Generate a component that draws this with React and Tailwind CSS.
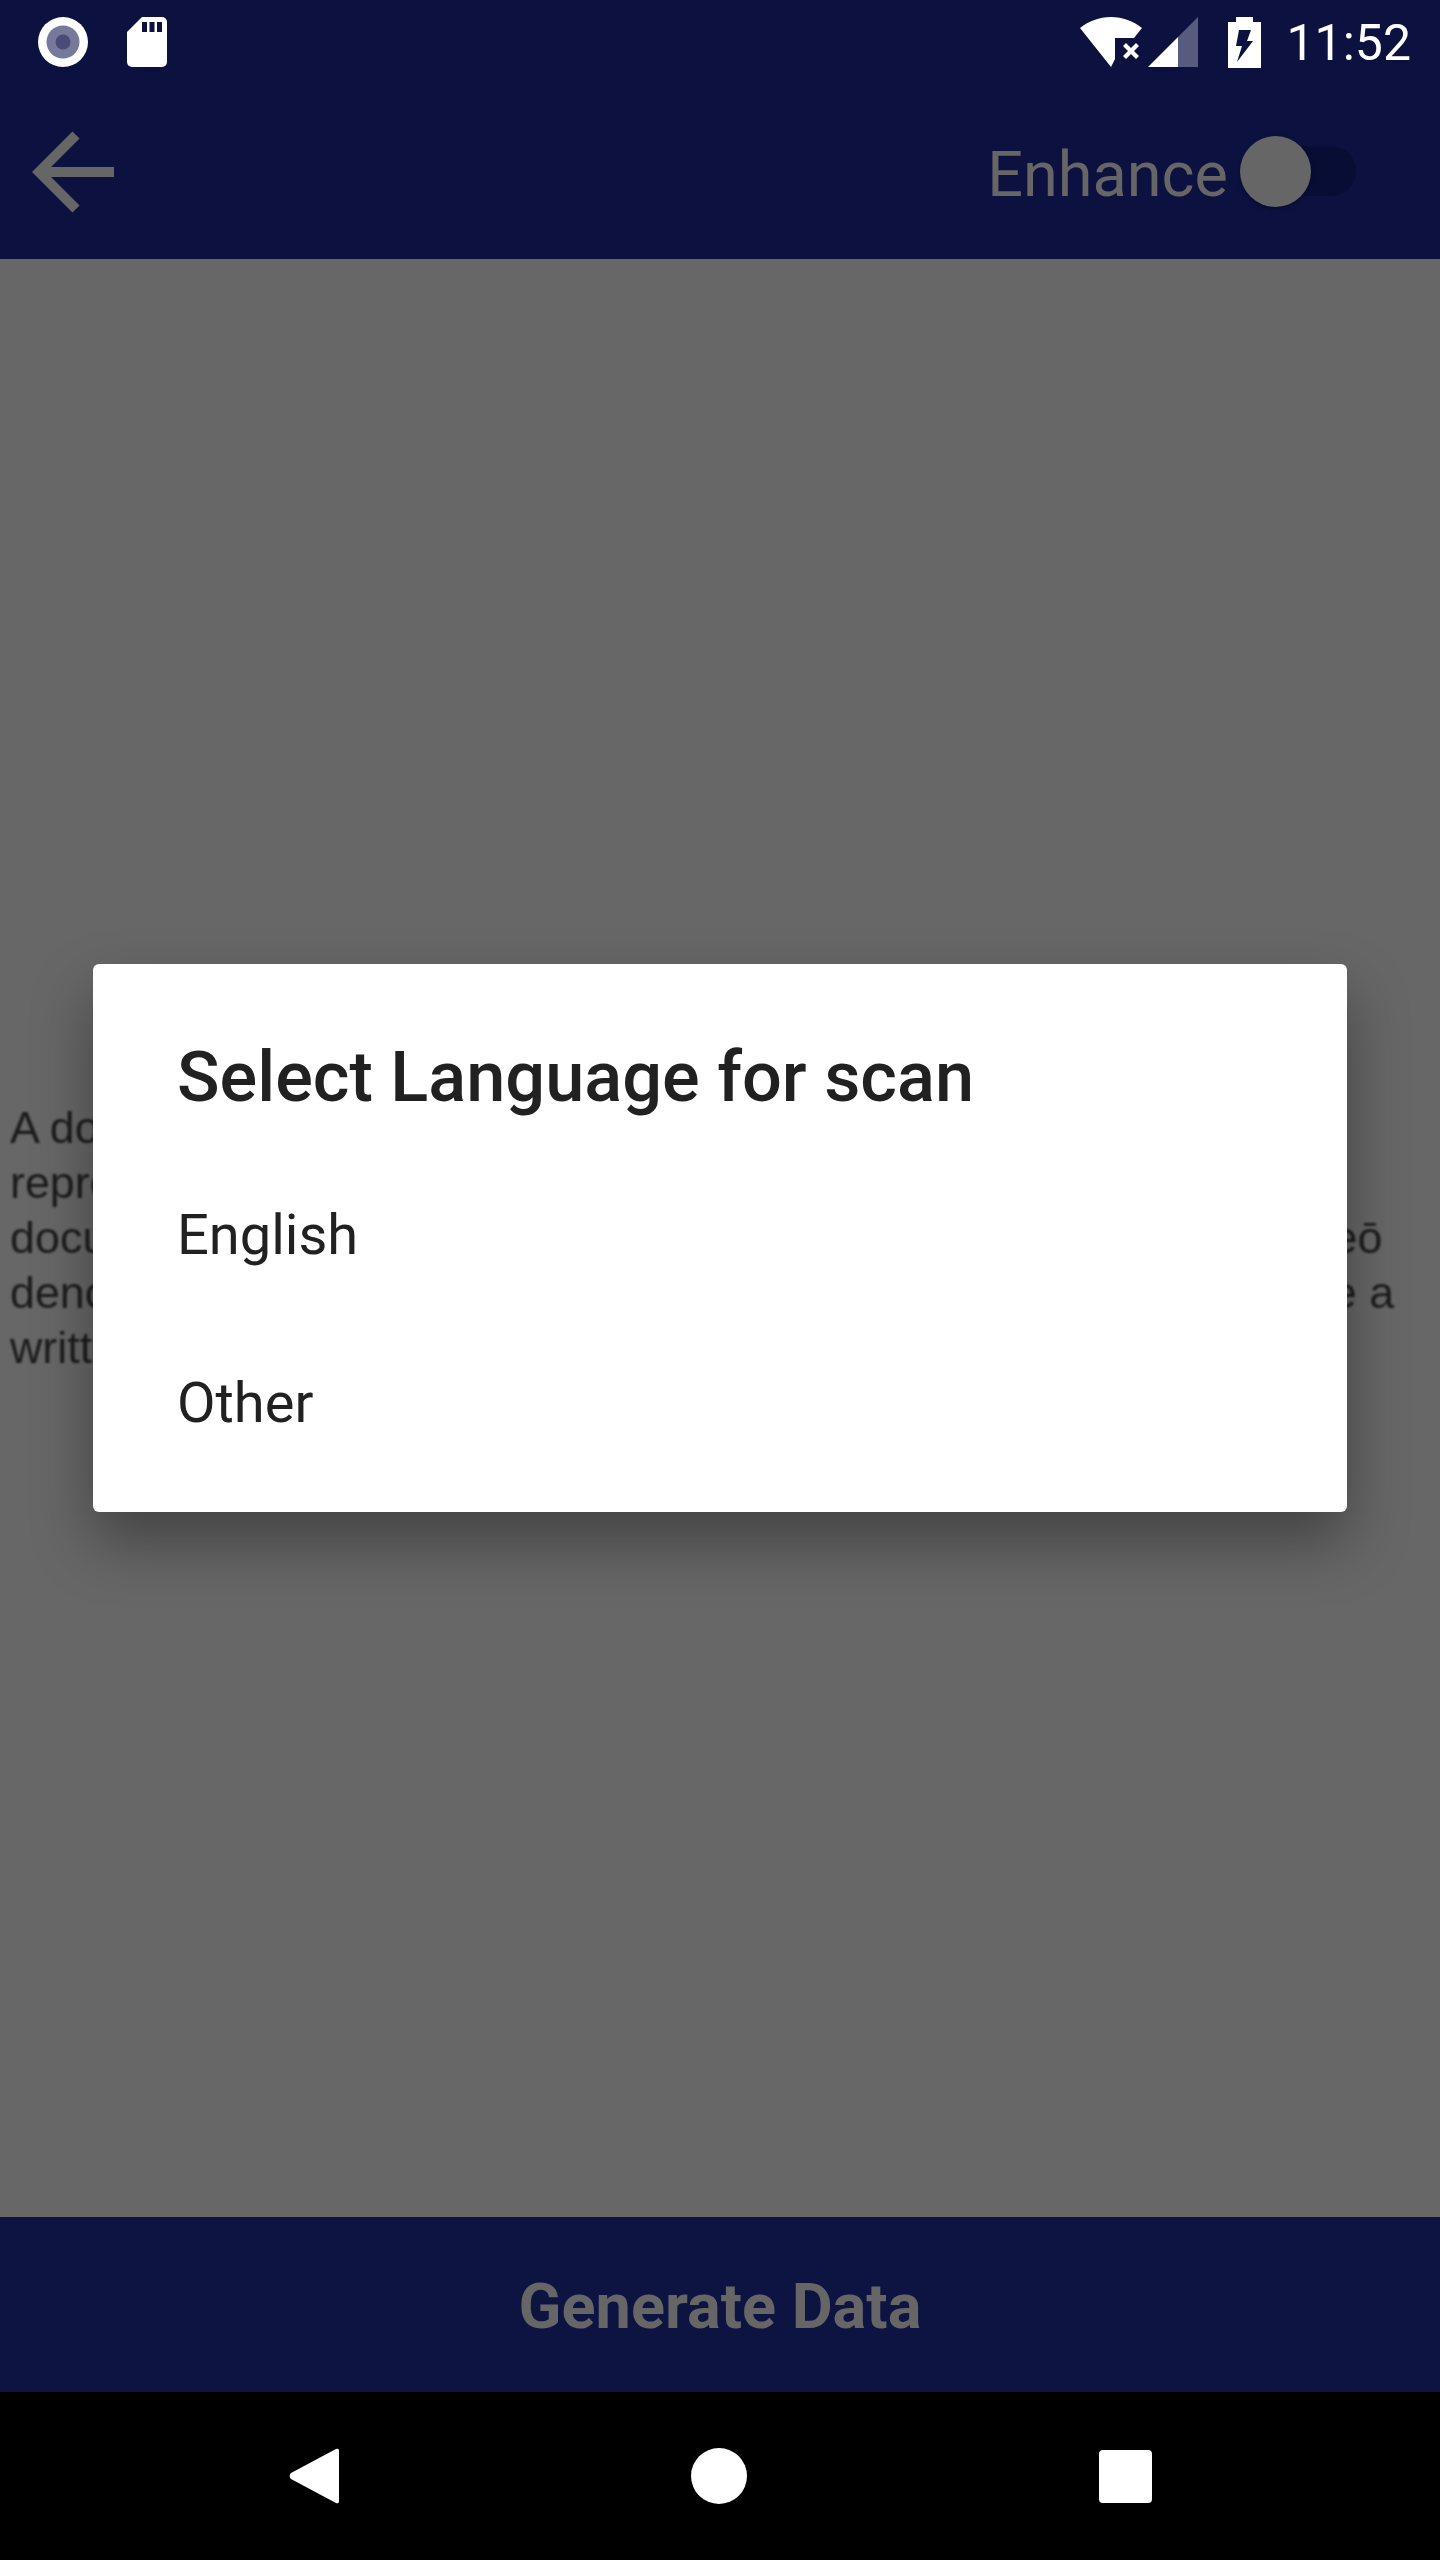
import React from 'react';

const ROBOTO = { fontFamily: 'Roboto, sans-serif' };

function StatusLeft() {
  return (
    <div className="flex items-center gap-[39px] ml-[38px]">
      <svg width="50" height="50" viewBox="0 0 50 50">
        <circle cx="25" cy="25" r="25" fill="#fff" />
        <circle cx="25" cy="25" r="16.5" fill="#767a9a" />
        <circle cx="25" cy="25" r="7.5" fill="#494c78" />
      </svg>
      <svg width="40" height="50" viewBox="0 0 40 50">
        <path d="M15 0H35a5 5 0 0 1 5 5V45a5 5 0 0 1-5 5H5a5 5 0 0 1-5-5V15Z" fill="#fff" />
        <rect x="15" y="5" width="5" height="10" fill="#0c1140" />
        <rect x="22.5" y="5" width="5" height="10" fill="#0c1140" />
        <rect x="30" y="5" width="5" height="10" fill="#0c1140" />
      </svg>
    </div>
  );
}

function StatusRight() {
  return (
    <div className="flex items-center mr-[29px]">
      <svg width="62" height="50" viewBox="0 0 62 50">
        <path d="M0 11C9 4 19 0 31 0s22 4 31 11L54 21H35V42l-4 8Z" fill="#fff" />
        <path d="M43 29l3-3 5 5 5-5 3 3-5 5 5 5-3 3-5-5-5 5-3-3 5-5Z" fill="#fff" />
      </svg>
      <svg className="ml-[6px]" width="50" height="50" viewBox="0 0 50 50">
        <path d="M50 0V50H30V20Z" fill="#575b7e" />
        <path d="M0 50L30 20V50Z" fill="#fff" />
      </svg>
      <svg className="ml-[30px]" width="33" height="51" viewBox="0 0 33 51">
        <path d="M8 0H25V5H33V51H0V5H8Z" fill="#fff" />
        <path d="M11 13H23L19 24H25L9 45 14 29H8Z" fill="#0c1140" />
      </svg>
      <span className="ml-[25px] pt-[2px] text-white text-[50px] leading-none" style={ROBOTO}>11:52</span>
    </div>
  );
}

function Backdrop() {
  // sits behind the dialog, only the line ends stick out
  return (
    <div className="flex-1 bg-[#676767] flex flex-col justify-start pt-[841px] pl-[10px] overflow-hidden">
      <div className="blur-[1.2px] text-[#1c1c1c] text-[44.8px] leading-[55px] whitespace-nowrap" style={{ fontFamily: '"Liberation Sans", sans-serif' }}>
        <div>A document is a written, drawn, presented, or</div>
        <div>representation of thought, often the manifestation</div>
        <div className="tracking-[0.06px]">documentum, which denotes a "teaching" or "lesson": the verb doceō</div>
        <div>denotes "to teach". In the past, the word was usually used to denote a</div>
        <div>written proof useful as evidence of a truth or fact</div>
      </div>
    </div>
  );
}

export default function App() {
  return (
    <div className="relative w-[1440px] h-[2560px] flex flex-col bg-black overflow-hidden" style={ROBOTO}>
      <header className="bg-[#0c1140]">
        <div className="h-[84px] flex items-center justify-between">
          <StatusLeft />
          <StatusRight />
        </div>
        <div className="h-[175px] flex items-center justify-between">
          <svg className="ml-[32px]" width="82" height="82" viewBox="0 0 82 82">
            <path d="M82 41H7M44 4L7 41l37 37" fill="none" stroke="#666" strokeWidth="10" />
          </svg>
          <div className="flex items-center mr-[84px]">
            <span className="pt-[6px] text-[#666] text-[63px] leading-none">Enhance</span>
            <div className="relative ml-[12px] w-[116px] h-[71px]">
              <div className="absolute left-[30px] top-[10px] w-[86px] h-[50px] rounded-full bg-[#080d36]" />
              <div className="absolute left-0 top-0 w-[71px] h-[71px] rounded-full bg-[#666] shadow-[0_2px_4px_rgba(0,0,0,0.3)]" />
            </div>
          </div>
        </div>
      </header>

      <Backdrop />

      <button className="h-[175px] shrink-0 bg-[#0d1442] text-[#666] text-[63px] font-bold pt-[5px]">Generate Data</button>

      <nav className="h-[168px] shrink-0 bg-black flex items-center justify-center">
        <div className="flex items-center gap-[352px]">
          <svg width="50" height="58" viewBox="0 0 50 58">
            <path d="M47 2a2 2 0 0 1 3 2V54a2 2 0 0 1-3 2L2 32a4 4 0 0 1 0-6Z" fill="#fff" />
          </svg>
          <div className="w-[56px] h-[56px] rounded-full bg-white" />
          <div className="w-[53px] h-[53px] rounded-[4px] bg-white" />
        </div>
      </nav>

      <div className="absolute left-[93px] top-[964px] w-[1254px] h-[548px] bg-white rounded-[6px] shadow-[0_30px_60px_rgba(0,0,0,0.35)] pl-[84px] text-[#212121]">
        <h2 className="mt-[73px] text-[70.3px] leading-[80px] font-medium">Select Language for scan</h2>
        <div className="mt-[85px] text-[56px] leading-[66px]">English</div>
        <div className="mt-[102px] text-[56px] leading-[66px]">Other</div>
      </div>
    </div>
  );
}
